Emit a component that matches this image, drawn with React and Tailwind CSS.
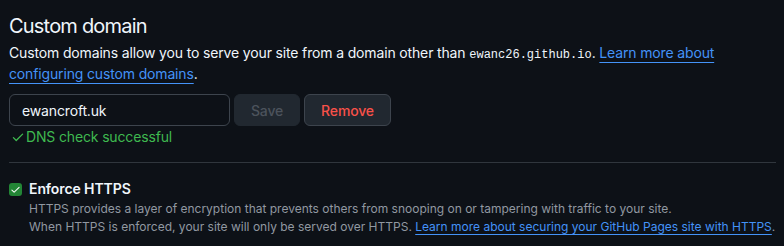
import React from "react";

export default function App() {
  const font = { fontFamily: "Inter, 'Noto Sans', sans-serif" };
  return (
    <div
      className="w-[784px] h-[246px] bg-[#0d1117] text-[#f0f6fc] pl-[9px] pr-[8px] pt-[11px] overflow-hidden"
      style={font}
    >
      <h2 className="text-[20px] leading-[30px] font-normal tracking-[-0.8px]">Custom domain</h2>
      <p className="text-[14px] leading-[21px] mt-[1px] tracking-[-0.15px]">
        Custom domains allow you to serve your site from a domain other than{" "}
        <code className="text-[12px] leading-none tracking-normal font-['Liberation_Mono',monospace]">ewanc26.github.io</code>.{" "}
        <a className="text-[#4493f8] underline underline-offset-[4px] decoration-1">
          Learn more about configuring custom domains
        </a>
        .
      </p>
      <div className="flex mt-[10px] gap-[4px]">
        <div className="w-[221px] h-[32px] rounded-[6px] border border-[#3d444d] flex items-center px-[12px] text-[14px] tracking-[-0.15px]">
          ewancroft.uk
        </div>
        <button className="w-[66px] h-[32px] rounded-[6px] bg-[#212830] border border-[#212830] text-[#4c535c] text-[14px] font-medium tracking-[-0.15px]">
          Save
        </button>
        <button className="w-[87px] h-[32px] rounded-[6px] bg-[#212830] border border-[#3d444d] text-[#f85149] text-[14px] font-medium tracking-[-0.15px]">
          Remove
        </button>
      </div>
      <div className="flex items-center text-[#3fb950] text-[14px] leading-[21px] pl-[2px] tracking-[-0.15px]">
        <svg width="14" height="14" viewBox="0 0 16 16" fill="currentColor" className="mr-[1px]">
          <path d="M13.78 4.22a.75.75 0 0 1 0 1.06l-7.25 7.25a.75.75 0 0 1-1.06 0L2.22 9.28a.751.751 0 0 1 .018-1.042.751.751 0 0 1 1.042-.018L6 10.94l6.72-6.72a.75.75 0 0 1 1.06 0Z" />
        </svg>
        DNS check successful
      </div>
      <div className="h-px bg-[#30363d] mt-[15px]" />
      <div className="flex mt-[18px]">
        <div className="w-[13px] h-[13px] rounded-[3px] bg-[#238636] flex items-center justify-center mt-[2px] shrink-0">
          <svg width="11" height="11" viewBox="0 0 16 16" fill="#ffffff">
            <path d="M13.78 4.22a.75.75 0 0 1 0 1.06l-7.25 7.25a.75.75 0 0 1-1.06 0L2.22 9.28a.751.751 0 0 1 .018-1.042.751.751 0 0 1 1.042-.018L6 10.94l6.72-6.72a.75.75 0 0 1 1.06 0Z" />
          </svg>
        </div>
        <div className="ml-[7px]">
          <div className="text-[14px] leading-[16px] font-semibold tracking-[-0.1px]">Enforce HTTPS</div>
          <div className="text-[12px] leading-[18px] text-[#9198a1] mt-[3px]">
            HTTPS provides a layer of encryption that prevents others from snooping on or tampering with traffic to your site.
            <br />
            When HTTPS is enforced, your site will only be served over HTTPS.{" "}
            <a className="text-[#4493f8] underline underline-offset-[3px] decoration-1">
              Learn more about securing your GitHub Pages site with HTTPS
            </a>
            .
          </div>
        </div>
      </div>
    </div>
  );
}
